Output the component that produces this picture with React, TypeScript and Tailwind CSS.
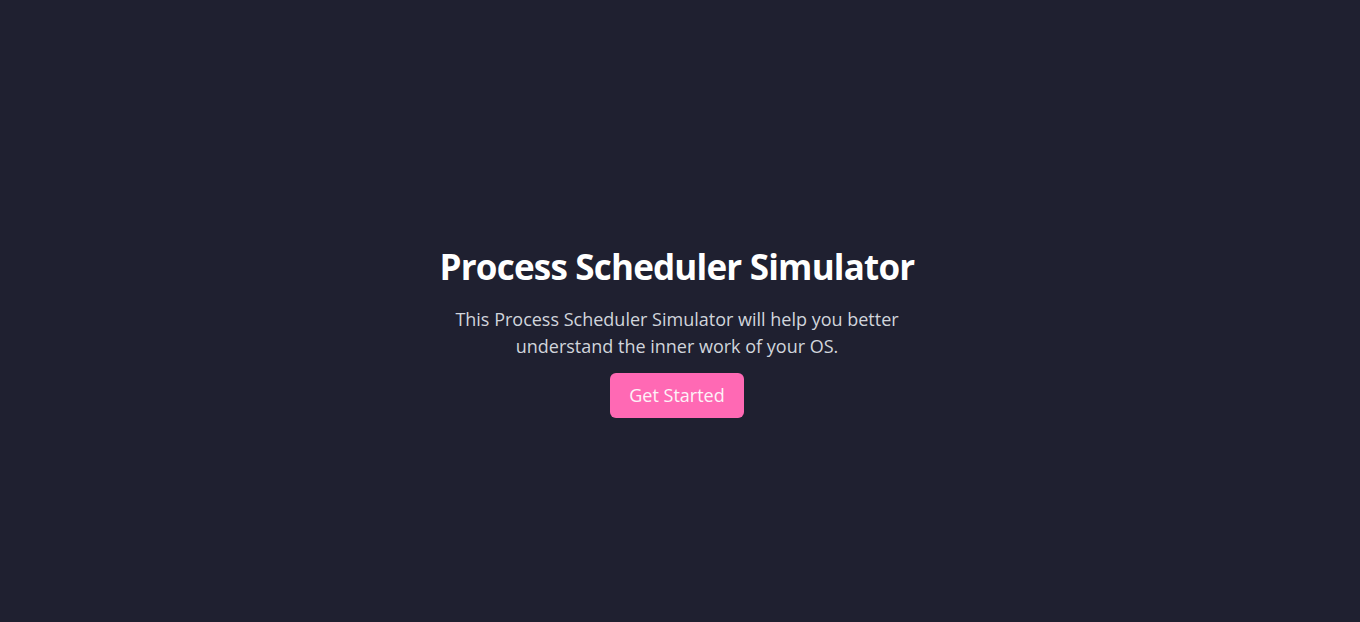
export default function App() {
  return (
    <div
      className="min-h-screen w-full bg-[#1f2030] flex items-center justify-center pt-[42px] pr-[6px]"
      style={{ fontFamily: '"Segoe UI", "Open Sans", "Noto Sans", sans-serif' }}
    >
      <div className="flex flex-col items-center text-center">
        <h1 className="text-[35px] leading-10 tracking-[-0.8px] font-bold text-white mb-[19px]">Process Scheduler Simulator</h1>
        <p className="text-lg text-gray-300 w-[470px] leading-[27px]">
          This Process Scheduler Simulator will help you better understand the inner work of your OS.
        </p>
        <button className="mt-[13px] rounded-md bg-[#ff69b4] px-[19px] py-2 text-lg leading-[29px] text-pink-50">
          Get Started
        </button>
      </div>
    </div>
  );
}
